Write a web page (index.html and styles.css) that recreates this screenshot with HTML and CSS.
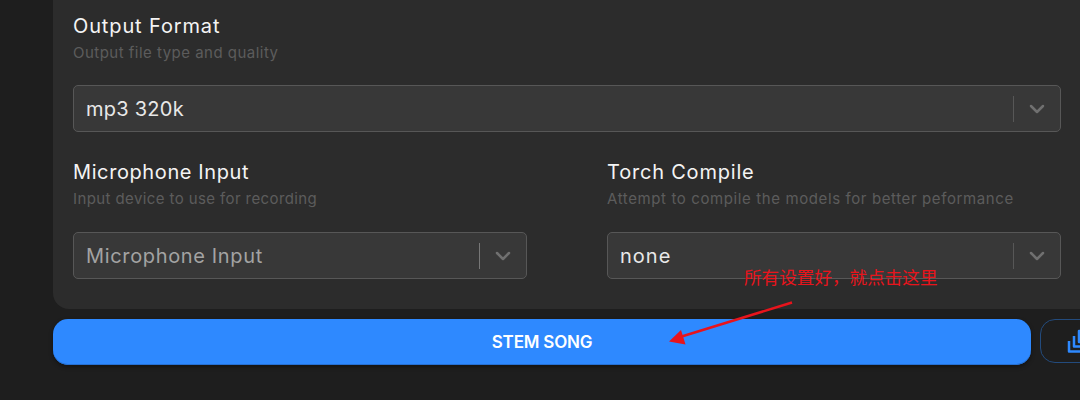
FILE: index.html
```html
<!DOCTYPE html>
<html lang="en">
<head>
    <meta charset="UTF-8">
    <title>Stem Song</title>
    <meta name="viewport" content="width=device-width, initial-scale=1.0">
    <link rel="stylesheet" href="styles.css">
</head>
<body>
    <main class="page">
        <section class="settings">
            <div class="field">
                <h2 class="label format-label">Output Format</h2>
                <p class="hint format-hint">Output file type and quality</p>
                <div class="select">
                    <span class="value format-value">mp3 320k</span>
                    <span class="separator"></span>
                    <svg class="chevron" viewBox="0 0 16 10"><path d="M2 2l6 6 6-6"/></svg>
                </div>
            </div>
            <div class="row">
                <div class="field">
                    <h2 class="label mic-label">Microphone Input</h2>
                    <p class="hint mic-hint">Input device to use for recording</p>
                    <div class="select">
                        <span class="value placeholder">Microphone Input</span>
                        <span class="separator bright"></span>
                        <svg class="chevron" viewBox="0 0 16 10"><path d="M2 2l6 6 6-6"/></svg>
                    </div>
                </div>
                <div class="field">
                    <h2 class="label torch-label">Torch Compile</h2>
                    <p class="hint torch-hint">Attempt to compile the models for better peformance</p>
                    <div class="select">
                        <span class="value torch-value">none</span>
                        <span class="separator"></span>
                        <svg class="chevron" viewBox="0 0 16 10"><path d="M2 2l6 6 6-6"/></svg>
                    </div>
                </div>
            </div>
        </section>
        <div class="actions">
            <button class="stem-button">STEM SONG</button>
            <button class="batch-button" aria-label="Batch">
                <svg viewBox="0 0 24 24"><path d="M2 12v10.5h12M7 7v10.5h12M12 2h11v11H12z"/></svg>
            </button>
        </div>
    </main>

    <div class="note" lang="zh-CN">所有设置好，就点击这里</div>
    <svg class="arrow" viewBox="0 0 128 46">
        <path class="shaft" d="M124 4.5L12 39"/>
        <path class="head" d="M1 43.5l12-11.5 4.5 14.5z"/>
    </svg>
</body>
</html>
```

FILE: styles.css
```css
:root {
    --bg: #1e1e1e;
    --panel: #2c2c2c;
    --control: #383838;
    --border: #575757;
    --blue: #2e89ff;
    --red: #e8141c;
}

* {
    box-sizing: border-box;
}

body {
    margin: 0;
    height: 400px;
    overflow: hidden;
    position: relative;
    background: var(--bg);
    color: #f4f4f4;
    font-family: Inter, "Noto Sans CJK SC", sans-serif;
}

.page {
    width: 1048px;
    margin-left: 53px;
}

.settings {
    height: 309px;
    padding: 12px 40px 0 20px;
    background: var(--panel);
    border-radius: 0 0 16px 16px;
}

.row {
    display: grid;
    grid-template-columns: 1fr 1fr;
    gap: 80px;
    margin-top: 26px;
}

.label {
    margin: 0;
    font-size: 20px;
    font-weight: 400;
    line-height: 29px;
    white-space: nowrap;
}

.hint {
    margin: 0 0 20px;
    color: #5c5c5c;
    font-size: 15px;
    line-height: 24px;
    white-space: nowrap;
}

.row .hint {
    margin-bottom: 21px;
}

.format-label {
    letter-spacing: 0.87px;
}

.format-hint {
    letter-spacing: 0.48px;
}

.format-value {
    letter-spacing: 0.25px;
}

.mic-label {
    letter-spacing: 0.6px;
}

.mic-hint {
    letter-spacing: 0.4px;
}

.torch-label {
    letter-spacing: 0.8px;
}

.torch-hint {
    letter-spacing: 0.61px;
}

.torch-value {
    letter-spacing: 1px;
}

.select {
    display: flex;
    align-items: center;
    height: 47px;
    padding: 0 15px 0 12px;
    background: var(--control);
    border: 1px solid var(--border);
    border-radius: 5px;
}

.value {
    flex: 1;
    color: #e8e8e8;
    font-size: 20px;
    white-space: nowrap;
}

.placeholder {
    color: #a3a3a3;
    letter-spacing: 0.65px;
}

.separator {
    width: 1px;
    height: 26px;
    margin-right: 15px;
    background: var(--border);
}

.separator.bright {
    background: #777;
}

.chevron {
    width: 16px;
    height: 10px;
    fill: none;
    stroke: #707070;
    stroke-width: 2.5;
    stroke-linecap: round;
    stroke-linejoin: round;
}

.actions {
    display: flex;
    align-items: flex-start;
    gap: 9px;
    margin-top: 10px;
}

.stem-button {
    flex: none;
    width: 978px;
    height: 46px;
    padding: 0;
    border: none;
    border-radius: 15px;
    background: var(--blue);
    box-shadow: inset 0 -1px #2670d3, 0 2px 4px rgba(0, 0, 0, 0.4);
    color: #fff;
    font: 600 17px Inter, sans-serif;
    letter-spacing: -0.2px;
}

.batch-button {
    flex: none;
    width: 78px;
    height: 44px;
    padding: 0 0 0 26px;
    border: 1px solid #234b7d;
    border-radius: 15px;
    background: none;
    text-align: left;
}

.batch-button svg {
    display: block;
    width: 24px;
    height: 24px;
    fill: none;
    stroke: var(--blue);
    stroke-width: 2.5;
    stroke-linejoin: round;
}

/* annotation over the form */
.note {
    position: absolute;
    left: 744px;
    top: 264px;
    color: var(--red);
    font: 400 17.6px/26px "Noto Sans CJK SC", sans-serif;
    white-space: nowrap;
}

.arrow {
    position: absolute;
    left: 668px;
    top: 298px;
    width: 128px;
    height: 46px;
    overflow: visible;
}

.shaft {
    stroke: var(--red);
    stroke-width: 2.5;
}

.head {
    fill: var(--red);
}
```
